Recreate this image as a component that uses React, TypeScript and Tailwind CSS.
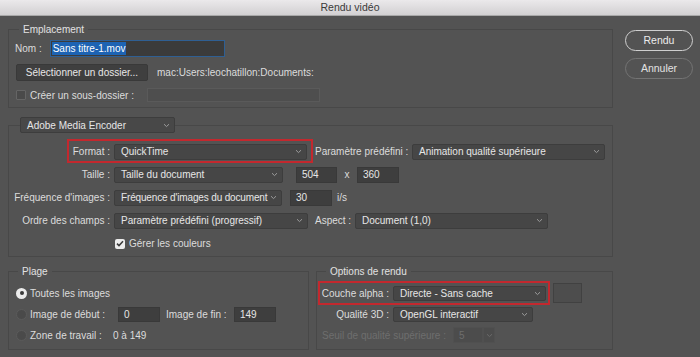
import React from 'react';

const Chevron = ({ className = '' }: { className?: string }) => (
    <svg width="7" height="5" viewBox="0 0 7 5" className={className}>
        <path d="M1 1.2l2.5 2.4L6 1.2" fill="none" stroke="currentColor" strokeWidth="1" />
    </svg>
);

const Select = ({ value, className = '' }: { value: string; className?: string }) => (
    <div className={`flex items-center justify-between gap-[2px] bg-[#464646] border border-[#3d3d3d] rounded-[2px] pl-[6px] pr-[4px] text-[#e6e6e6] whitespace-nowrap ${className}`}>
        <span>{value}</span>
        <Chevron className="text-[#9c9c9c] shrink-0" />
    </div>
);

const Field = ({ value, className = '' }: { value?: string; className?: string }) => (
    <div className={`flex items-center bg-[#3e3e3e] border border-[#393939] pl-[5px] text-[#e6e6e6] ${className}`}>
        {value}
    </div>
);

const Radio = ({ checked }: { checked?: boolean }) =>
    checked ? (
        <span className="w-[11px] h-[11px] rounded-full bg-[#ececec] flex items-center justify-center shrink-0">
            <span className="w-[4px] h-[4px] rounded-full bg-[#3a3a3a]" />
        </span>
    ) : (
        <span className="w-[11px] h-[11px] rounded-full bg-[#4a4a4a] border border-[#5b5b5b] shrink-0" />
    );

const App: React.FC = () => {
    return (
        <div className="w-[700px] h-[357px] bg-[#535353] overflow-hidden font-['Liberation_Sans',Arial,sans-serif] text-[10px] text-[#dcdcdc] whitespace-nowrap">
            {/* title bar */}
            <div className="h-[16px] bg-gradient-to-b from-[#ebe9eb] to-[#d2d0d2] border-b border-[#a8a8a8] flex items-center justify-center text-[10.5px] text-[#3a3a3a]">
                Rendu vidéo
            </div>

            <div className="flex">
                <div className="ml-[8px] w-[605px]">
                    {/* Emplacement */}
                    <fieldset className="mt-[7px] border border-[#484848] pb-[5px]">
                        <legend className="ml-[10px] px-[4px] h-[13px] leading-[13px] text-[#e2e2e2]">Emplacement</legend>
                        <div className="flex flex-col gap-[7px] pt-[4px]">
                            <div className="flex items-center h-[17px] pl-[6px]">
                                <span>Nom :</span>
                                <div className="ml-[8px] w-[175px] h-[17px] flex items-center bg-[#3b3b3b] border border-[#2f5f93]">
                                    <span className="ml-[1px] px-[1px] bg-[#1d63b3] text-white leading-[13px]">Sans titre-1.mov</span>
                                </div>
                            </div>
                            <div className="flex items-center h-[17px] pl-[7px]">
                                <div className="w-[132px] h-[17px] flex items-center justify-center bg-[#3f3f3f] border border-[#393939] rounded-[2px] text-[#e8e8e8]">
                                    Sélectionner un dossier...
                                </div>
                                <span className="ml-[9px]">mac:Users:leochatillon:Documents:</span>
                            </div>
                            <div className="flex items-center h-[14px] pl-[7px]">
                                <span className="w-[10px] h-[10px] bg-[#4a4a4a] border border-[#656565] rounded-[1px]" />
                                <span className="ml-[4px] w-[117px]">Créer un sous-dossier :</span>
                                <div className="w-[173px] h-[14px] bg-[#4e4e4e] border border-[#5a5a5a]" />
                            </div>
                        </div>
                    </fieldset>

                    {/* Adobe Media Encoder */}
                    <fieldset className="mt-[9px] border border-[#484848] pb-[4px]">
                        <legend className="ml-[11px] h-[16px]">
                            <Select value="Adobe Media Encoder" className="w-[155px] h-[16px] bg-[#484848]" />
                        </legend>
                        <div className="flex flex-col gap-[6px] pt-[10px]">
                            <div className="relative flex items-center h-[17px]">
                                <span className="w-[101px] text-right">Format :</span>
                                <Select value="QuickTime" className="ml-[4px] w-[193px] h-[16px]" />
                                <span className="ml-[8px] w-[97px]">Paramètre prédéfini :</span>
                                <Select value="Animation qualité supérieure" className="w-[193px] h-[16px]" />
                                <div className="absolute left-[58px] top-[-4px] w-[246px] h-[24px] border-2 border-[#c3282e]" />
                            </div>
                            <div className="flex items-center h-[17px]">
                                <span className="w-[101px] text-right">Taille :</span>
                                <Select value="Taille du document" className="ml-[4px] w-[169px] h-[16px]" />
                                <Field value="504" className="ml-[13px] w-[41px] h-[16px]" />
                                <span className="w-[20px] text-center">x</span>
                                <Field value="360" className="w-[42px] h-[16px]" />
                            </div>
                            <div className="flex items-center h-[17px]">
                                <span className="w-[101px] text-right">Fréquence d'images :</span>
                                <Select value="Fréquence d'images du document" className="ml-[4px] w-[168px] h-[16px] tracking-[-0.15px] pl-[5px]" />
                                <Field value="30" className="ml-[8px] w-[42px] h-[16px]" />
                                <span className="ml-[5px]">i/s</span>
                            </div>
                            <div className="flex items-center h-[17px]">
                                <span className="w-[101px] text-right">Ordre des champs :</span>
                                <Select value="Paramètre prédéfini (progressif)" className="ml-[4px] w-[194px] h-[16px]" />
                                <span className="ml-[7px] w-[36px]">Aspect :</span>
                                <Select value="Document (1,0)" className="ml-[4px] w-[193px] h-[16px]" />
                            </div>
                            <div className="flex items-center h-[17px]">
                                <span className="ml-[106px] w-[10px] h-[10px] bg-[#ececec] rounded-[2px] flex items-center justify-center">
                                    <svg width="8" height="7" viewBox="0 0 8 7">
                                        <path d="M1 3.6l2 2L7 1.2" fill="none" stroke="#3a3a3a" strokeWidth="1.5" />
                                    </svg>
                                </span>
                                <span className="ml-[4px]">Gérer les couleurs</span>
                            </div>
                        </div>
                    </fieldset>

                    <div className="flex gap-[7px] mt-[8px]">
                        {/* Plage */}
                        <fieldset className="w-[301px] border border-[#484848] pb-[5px]">
                            <legend className="ml-[9px] px-[4px] h-[13px] leading-[13px] text-[#e2e2e2]">Plage</legend>
                            <div className="flex flex-col gap-[3px] pt-[6px] pl-[7px]">
                                <div className="flex items-center h-[18px]">
                                    <Radio checked />
                                    <span className="ml-[3px]">Toutes les images</span>
                                </div>
                                <div className="flex items-center h-[18px]">
                                    <Radio />
                                    <span className="ml-[3px] w-[84px]">Image de début :</span>
                                    <Field value="0" className="ml-[4px] w-[42px] h-[15px]" />
                                    <span className="ml-[6px] w-[64px]">Image de fin :</span>
                                    <Field value="149" className="ml-[4px] w-[42px] h-[15px]" />
                                </div>
                                <div className="flex items-center h-[18px]">
                                    <Radio />
                                    <span className="ml-[3px] w-[83px]">Zone de travail :</span>
                                    <span>0 à 149</span>
                                </div>
                            </div>
                        </fieldset>

                        {/* Options de rendu */}
                        <fieldset className="w-[297px] border border-[#484848] pb-[5px]">
                            <legend className="ml-[9px] px-[4px] h-[13px] leading-[13px] text-[#e2e2e2]">Options de rendu</legend>
                            <div className="flex flex-col gap-[3px] pt-[6px]">
                                <div className="relative flex items-center h-[18px]">
                                    <span className="w-[72px] text-right">Couche alpha :</span>
                                    <Select value="Directe - Sans cache" className="ml-[4px] w-[153px] h-[15px]" />
                                    <div className="ml-[7px] w-[29px] h-[20px] bg-[#4d4d4d] border border-[#414141]" />
                                    <div className="absolute left-[1px] top-[-3px] w-[232px] h-[24px] border-2 border-[#c3282e]" />
                                </div>
                                <div className="flex items-center h-[18px]">
                                    <span className="w-[72px] text-right">Qualité 3D :</span>
                                    <Select value="OpenGL interactif" className="ml-[4px] w-[140px] h-[15px]" />
                                </div>
                                <div className="flex items-center h-[18px] text-[#6e6e6e]">
                                    <span className="ml-[5px] w-[131px]">Seuil de qualité supérieure :</span>
                                    <div className="w-[30px] h-[16px] flex items-center pl-[5px] bg-[#4c4c4c] border border-[#505050]">5</div>
                                    <div className="w-[12px] h-[16px] flex items-center justify-center bg-[#4c4c4c] border border-[#505050]">
                                        <Chevron className="text-[#6a6a6a]" />
                                    </div>
                                </div>
                            </div>
                        </fieldset>
                    </div>
                </div>

                {/* buttons */}
                <div className="ml-[12px] pt-[14px] flex flex-col gap-[7px]">
                    <button className="w-[68px] h-[21px] rounded-full border border-[#cfcfcf] text-[#ececec] text-[10.5px]">Rendu</button>
                    <button className="w-[68px] h-[21px] rounded-full border border-[#747474] text-[#e2e2e2] text-[10.5px]">Annuler</button>
                </div>
            </div>
        </div>
    );
};

export default App;
